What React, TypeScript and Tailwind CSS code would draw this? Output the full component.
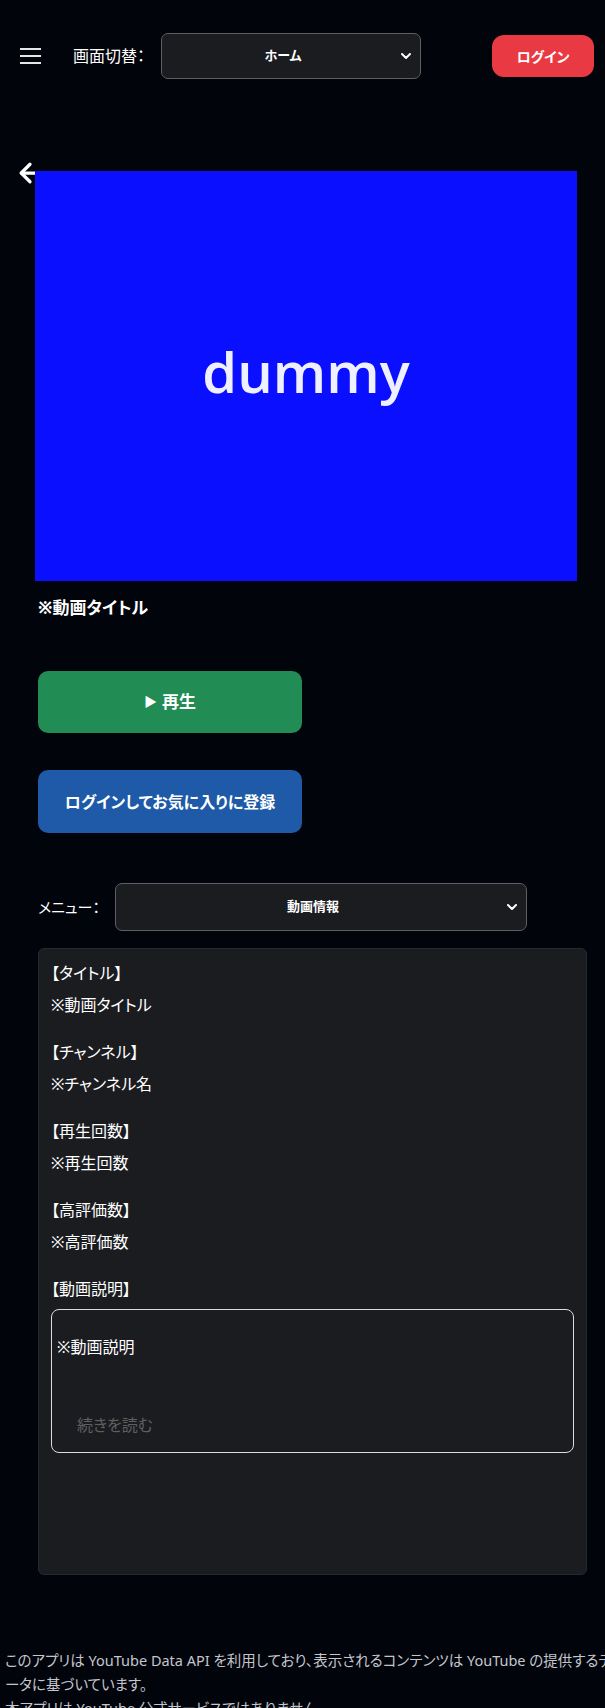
import { ArrowLeft, ChevronDown } from "lucide-react";

const infoItems = [
  { label: "【タイトル】", value: "※動画タイトル" },
  { label: "【チャンネル】", value: "※チャンネル名" },
  { label: "【再生回数】", value: "※再生回数" },
  { label: "【高評価数】", value: "※高評価数" },
];

function FakeSelect({ value, className }: { value: string; className: string }) {
  return (
    <div
      className={`relative flex items-center justify-center rounded-[7px] border border-[#5e5f63] bg-[#1b1c20] pl-[14px] pr-[30px] text-[13px] font-bold text-white ${className}`}
    >
      <span>{value}</span>
      <ChevronDown size={16} strokeWidth={3} className="absolute right-[6px] top-1/2 -translate-y-1/2 text-white" />
    </div>
  );
}

export default function App() {
  return (
    <div className="relative min-h-[1708px] w-full overflow-hidden bg-[#02040c] font-['Noto_Sans','Noto_Sans_CJK_JP',sans-serif] text-white [font-feature-settings:'palt']">
      {/* ヘッダー */}
      <header className="flex h-[112px] items-center pl-[20px] pr-[11px]">
        <button className="flex w-[21px] flex-col gap-[5px]">
          <span className="h-[2px] w-full bg-[#e6e6e6]" />
          <span className="h-[2px] w-full bg-[#e6e6e6]" />
          <span className="h-[2px] w-full bg-[#e6e6e6]" />
        </button>
        <span className="ml-[32px] text-[16px] leading-[24px]">画面切替：</span>
        <FakeSelect value="ホーム" className="ml-[16px] h-[46px] w-[260px]" />
        <button className="ml-auto h-[42px] w-[102px] rounded-[12px] bg-[#e93a44] text-[14px] font-bold text-white">
          ログイン
        </button>
      </header>

      {/* 動画 */}
      <section className="relative pt-[59px]">
        <ArrowLeft size={30} strokeWidth={2.6} className="absolute left-[15px] top-[46px] text-white" />
        <div className="relative ml-[35px] flex h-[410px] w-[542px] items-center justify-center bg-[#0b0fff]">
          <span className="mb-[10px] font-['Open_Sans',sans-serif] text-[56px] font-semibold leading-none text-[#eef0ff] [filter:blur(0.5px)]">
            dummy
          </span>
        </div>

        <div className="pl-[38px]">
          <h1 className="mt-[15px] text-[17px] font-bold leading-[24px]">※動画タイトル</h1>

          <button className="mt-[51px] flex h-[62px] w-[264px] items-center justify-center gap-[5px] rounded-[10px] bg-[#218c53] text-[17px] font-bold">
            <span className="text-[13px]">▶</span>
            <span>再生</span>
          </button>

          <button className="mt-[37px] flex h-[63px] w-[264px] items-center justify-center rounded-[10px] bg-[#1e5aa7] text-[16px] font-bold">
            ログインしてお気に入りに登録
          </button>

          <div className="mt-[50px] flex items-center">
            <span className="w-[77px] text-[15px] leading-[24px]">メニュー：</span>
            <FakeSelect value="動画情報" className="h-[48px] w-[412px]" />
          </div>
        </div>

        {/* 動画情報パネル */}
        <div className="ml-[38px] mt-[17px] h-[627px] w-[549px] rounded-[6px] border border-[#232a33] bg-[#1b1c20] px-[12px] pt-[12px] text-[16px] leading-[24px]">
          <div className="flex flex-col gap-[23px]">
            {infoItems.map((item) => (
              <div key={item.label}>
                <p>{item.label}</p>
                <p className="mt-[8px]">{item.value}</p>
              </div>
            ))}
            <div>
              <p>【動画説明】</p>
              <div className="mt-[8px] rounded-[8px] border border-[#dcdcdc] px-[5px] pb-[15px] pt-[25px]">
                <p>※動画説明</p>
                <button className="ml-[20px] mt-[54px] block text-[#5f5f5f]">続きを読む</button>
              </div>
            </div>
          </div>
        </div>
      </section>

      {/* フッター */}
      <footer className="mt-[73px] px-[5px] text-[14.5px] leading-[24px] text-[#c4c6cc]">
        <p className="whitespace-nowrap">
          このアプリは YouTube Data API を利用しており、表示されるコンテンツは YouTube の提供するデ
        </p>
        <p className="whitespace-nowrap">ータに基づいています。</p>
        <p className="whitespace-nowrap">本アプリは YouTube 公式サービスではありません。</p>
      </footer>
    </div>
  );
}
